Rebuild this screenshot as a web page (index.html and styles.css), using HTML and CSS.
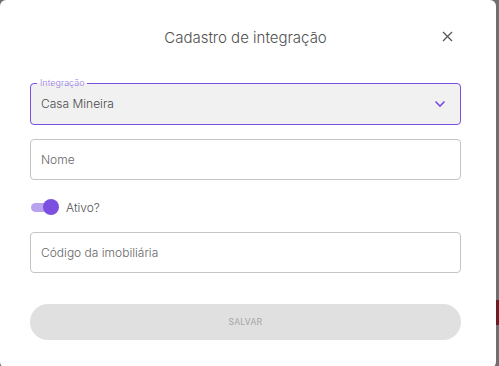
FILE: index.html
```html
<!DOCTYPE html>
<html>
<head>
    <title>Cadastro de integração</title>
    <meta name="viewport" content="width=device-width, initial-scale=1">
    <link rel="stylesheet" href="styles.css">
</head>
<body>
    <div class="dialog">
        <div class="dialog-header">
            <span></span>
            <h2 class="dialog-title">Cadastro de integração</h2>
            <button class="close-button" aria-label="Fechar">
                <svg width="11" height="11" viewBox="0 0 11 11">
                    <path d="M1 1 L10 10 M10 1 L1 10" stroke="#555" stroke-width="1.3" fill="none"/>
                </svg>
            </button>
        </div>

        <div class="dialog-body">
            <fieldset class="select-field">
                <legend>Integração</legend>
                <div class="select-row">
                    <span class="select-value">Casa Mineira</span>
                    <svg class="chevron" width="12" height="8" viewBox="0 0 12 8">
                        <polyline points="1.5,1.5 6,6 10.5,1.5" stroke="#7b4fe0" stroke-width="1.6" fill="none"/>
                    </svg>
                </div>
            </fieldset>

            <div class="text-field">Nome</div>

            <div class="switch-row">
                <span class="switch"></span>
                <span class="switch-label">Ativo?</span>
            </div>

            <div class="text-field">Código da imobiliária</div>

            <button class="save-button" disabled>SALVAR</button>
        </div>
    </div>
</body>
</html>
```

FILE: styles.css
```css
body {
    margin: 0;
    padding: 0;
    font-family: Inter, "Noto Sans", sans-serif;
    background: linear-gradient(to bottom, #6f6f6f 300px, #6c1d24 300px, #6c1d24 325px, #6f6f6f 325px);
    height: 366px;
    overflow: hidden;
}

.dialog {
    width: 496px;
    height: 368px;
    background-color: #fff;
    border-radius: 6px;
    box-sizing: border-box;
}

.dialog-header {
    display: grid;
    grid-template-columns: 1fr auto 1fr;
    align-items: center;
    height: 78px;
    padding: 0 35px 0 30px;
}

.dialog-title {
    margin: 0;
    margin-top: -3px;
    font-size: 15px;
    font-weight: 300;
    color: #505050;
}

.close-button {
    justify-self: end;
    margin-right: 8px;
    margin-top: -6px;
    padding: 0;
    border: none;
    background: none;
    width: 11px;
    height: 11px;
    display: flex;
}

.dialog-body {
    padding: 0 35px 0 30px;
    display: flex;
    flex-direction: column;
}

.select-field {
    margin: 0;
    padding: 0 10px;
    border: 1px solid #7b4fe0;
    border-radius: 4px;
    background-color: #f1f1f1;
    min-width: 0;
}

.select-field legend {
    font-size: 9px;
    line-height: 10px;
    padding: 0 3px;
    margin-left: -4px;
    color: #9a7ce6;
    font-weight: 300;
}

.select-row {
    display: flex;
    align-items: center;
    justify-content: space-between;
    height: 31px;
    padding-bottom: 5px;
}

.select-value {
    font-size: 12px;
    font-weight: 300;
    color: #4a4a4a;
}

.chevron {
    margin-right: 4px;
}

.text-field {
    display: flex;
    align-items: center;
    height: 41px;
    box-sizing: border-box;
    border: 1px solid #c4c4c4;
    border-radius: 4px;
    padding: 0 10px;
    font-size: 12px;
    font-weight: 300;
    color: #666;
    margin-top: 14px;
}

.switch-row {
    display: flex;
    align-items: center;
    height: 16px;
    margin: 19px 0 3px 1px;
}

.switch {
    position: relative;
    width: 28px;
    height: 16px;
}

.switch::before {
    content: "";
    position: absolute;
    left: 0;
    top: 3.5px;
    width: 26px;
    height: 9px;
    border-radius: 5px;
    background-color: #b9a3ee;
}

.switch::after {
    content: "";
    position: absolute;
    left: 12px;
    top: 0;
    width: 16px;
    height: 16px;
    border-radius: 50%;
    background-color: #7b4fe0;
}

.switch-label {
    margin-left: 7px;
    font-size: 12px;
    font-weight: 300;
    color: #505050;
}

.save-button {
    margin-top: 31px;
    height: 36px;
    border: none;
    border-radius: 18px;
    background-color: #e0e0e0;
    color: #a6a6a6;
    font-family: Roboto, "Liberation Sans", sans-serif;
    font-size: 9px;
    font-weight: 400;
    letter-spacing: 0.3px;
}
```
